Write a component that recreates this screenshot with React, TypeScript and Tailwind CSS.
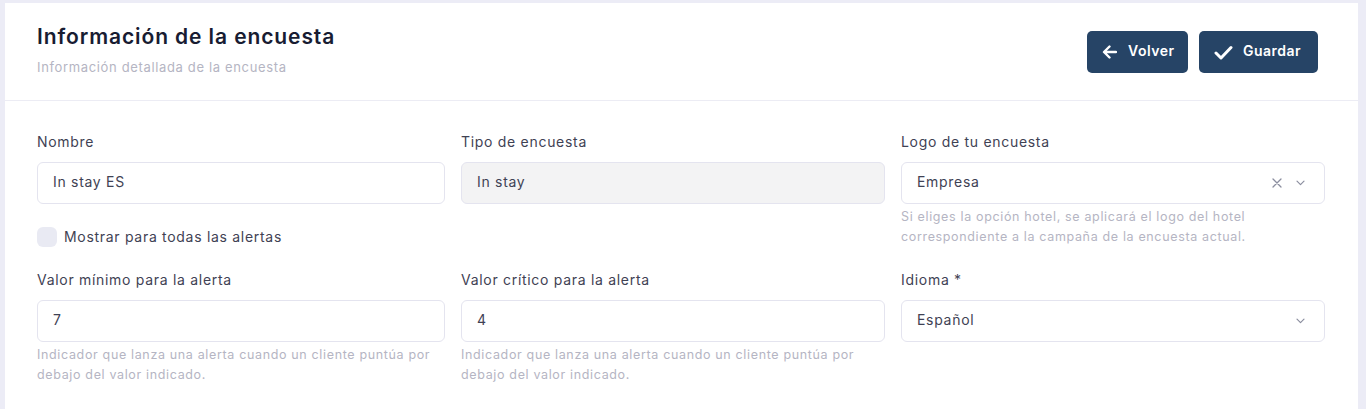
import React from "react";

const font = { fontFamily: "Inter, 'Noto Sans', sans-serif" };

function ArrowLeft() {
  return (
    <svg width="15" height="14" viewBox="0 0 15 14" fill="none">
      <path d="M14 7H2.5M7.5 1.5L2 7l5.5 5.5" stroke="white" strokeWidth="2.4" strokeLinecap="round" strokeLinejoin="round" />
    </svg>
  );
}

function Check() {
  return (
    <svg width="19" height="15" viewBox="0 0 19 15" fill="none">
      <path d="M2 8l5 5L17 2.5" stroke="white" strokeWidth="3" strokeLinecap="round" strokeLinejoin="round" />
    </svg>
  );
}

function Chevron() {
  return (
    <svg width="9" height="6" viewBox="0 0 9 6" fill="none">
      <path d="M1 1.2l3.5 3.5L8 1.2" stroke="#8b8e9f" strokeWidth="1.2" strokeLinecap="round" strokeLinejoin="round" />
    </svg>
  );
}

function Cross() {
  return (
    <svg width="10" height="10" viewBox="0 0 10 10" fill="none">
      <path d="M1 1l8 8M9 1L1 9" stroke="#8b8e9f" strokeWidth="1.3" strokeLinecap="round" />
    </svg>
  );
}

function Label({ children }: { children: React.ReactNode }) {
  return <div className="text-[14px] leading-5 tracking-[0.7px] text-[#3f4254] mb-[10px]">{children}</div>;
}

function Help({ children }: { children: React.ReactNode }) {
  return <div className="mt-[3px] text-[12.5px] leading-5 tracking-[0.65px] text-[#b5b5c3]">{children}</div>;
}

function Input({ value, disabled }: { value: string; disabled?: boolean }) {
  return (
    <div
      className={`h-[42px] rounded-md border border-[#e4e4ef] flex items-center pb-[3px] px-[15px] text-[14px] tracking-[0.7px] text-[#3f4254] ${
        disabled ? "bg-[#f3f3f4]" : "bg-white"
      }`}
    >
      {value}
    </div>
  );
}

function Select({ value, clear }: { value: string; clear?: boolean }) {
  return (
    <div className="h-[42px] rounded-md border border-[#e4e4ef] bg-white flex items-center pl-[15px] pr-[19px] text-[14px] tracking-[0.7px] text-[#3f4254]">
      <span className="flex-1 pb-[3px]">{value}</span>
      {clear && (
        <span className="mr-[14px] flex items-center">
          <Cross />
        </span>
      )}
      <Chevron />
    </div>
  );
}

export default function App() {
  return (
    <div className="w-[1366px] h-[409px] bg-[#ececf6] pt-[3px] pl-[5px] overflow-hidden" style={font}>
      <div className="w-[1353px] h-[406px] bg-white">
        <div className="h-[98px] border-b border-[#ececf4] flex justify-between pl-8 pr-10">
          <div className="pt-[19px]">
            <div className="text-[21px] leading-[30px] font-semibold tracking-[0.9px] text-[#181c32]">Información de la encuesta</div>
            <div className="mt-[5px] text-[13px] leading-5 tracking-[0.65px] text-[#b5b5c3]">Información detallada de la encuesta</div>
          </div>
          <div className="pt-[28px] flex gap-[11px]">
            <button className="h-[42px] w-[101px] rounded-[5px] bg-[#264466] flex items-center pl-[15px] gap-[11px] text-white text-[14px] tracking-[0.5px] font-semibold">
              <ArrowLeft />
              <span className="pb-[3px]">Volver</span>
            </button>
            <button className="h-[42px] w-[119px] rounded-[5px] bg-[#264466] flex items-center pl-[15px] gap-[10px] text-white text-[14px] tracking-[0.5px] font-semibold">
              <Check />
              <span className="pb-[3px]">Guardar</span>
            </button>
          </div>
        </div>
        <div className="px-8 pt-[31px] grid grid-cols-[408px_424px_424px] gap-x-4 gap-y-[23px]">
          <div>
            <Label>Nombre</Label>
            <Input value="In stay ES" />
            <div className="mt-[23px] flex items-center gap-[7px] h-5">
              <span className="w-5 h-5 rounded-md bg-[#e9eaf3]" />
              <span className="text-[14px] tracking-[0.7px] text-[#3f4254] pb-[1px]">Mostrar para todas las alertas</span>
            </div>
          </div>
          <div>
            <Label>Tipo de encuesta</Label>
            <Input value="In stay" disabled />
          </div>
          <div>
            <Label>Logo de tu encuesta</Label>
            <Select value="Empresa" clear />
            <Help>
              Si eliges la opción hotel, se aplicará el logo del hotel
              <br />
              correspondiente a la campaña de la encuesta actual.
            </Help>
          </div>
          <div>
            <Label>Valor mínimo para la alerta</Label>
            <Input value="7" />
            <Help>
              Indicador que lanza una alerta cuando un cliente puntúa por
              <br />
              debajo del valor indicado.
            </Help>
          </div>
          <div>
            <Label>Valor crítico para la alerta</Label>
            <Input value="4" />
            <Help>
              Indicador que lanza una alerta cuando un cliente puntúa por
              <br />
              debajo del valor indicado.
            </Help>
          </div>
          <div>
            <Label>Idioma *</Label>
            <Select value="Español" />
          </div>
        </div>
      </div>
    </div>
  );
}
